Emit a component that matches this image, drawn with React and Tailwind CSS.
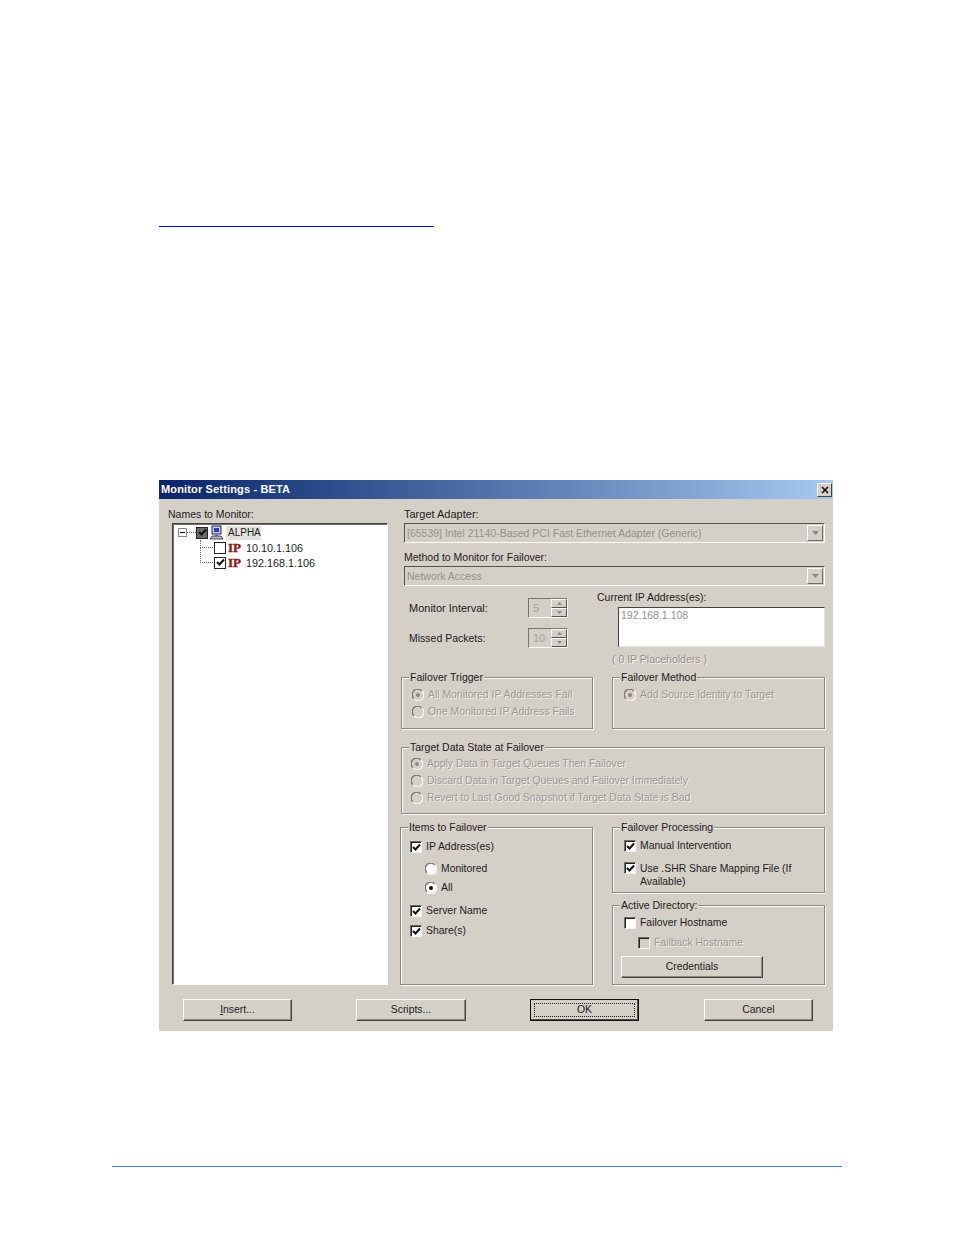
const FONT = "font-['Liberation_Sans',Arial,sans-serif]";

function Group({ title, className, children }) {
  return (
    <div className={`relative border border-[#8a8883] shadow-[1px_1px_0_#fff,inset_1px_1px_0_#fff] ${className}`}>
      <span className="absolute left-[7px] top-[-8px] bg-[#d4d0c8] px-px text-[10.5px] leading-[14px] text-[#1c1c1c]">
        {title}
      </span>
      {children}
    </div>
  );
}

function Tick() {
  return (
    <svg width="9" height="9" viewBox="0 0 9 9" fill="none">
      <path d="M1 4l2.5 2.5L8 1.5" stroke="#111" strokeWidth="2" />
    </svg>
  );
}

function Check({ checked, disabled }) {
  return (
    <span
      className={`flex h-3 w-3 shrink-0 items-center justify-center border border-t-[#6f6d68] border-l-[#6f6d68] border-r-[#f4f3f0] border-b-[#f4f3f0] shadow-[inset_1px_1px_0_#222] ${
        disabled ? "bg-[#d4d0c8]" : "bg-white"
      }`}
    >
      {checked && <Tick />}
    </span>
  );
}

function Radio({ checked, disabled }) {
  return (
    <svg width="12" height="12" viewBox="0 0 12 12" className="shrink-0">
      <circle cx="6" cy="6" r="5" fill={disabled ? "#d4d0c8" : "#fff"} />
      <path d="M1.8 9.5A5.4 5.4 0 0 1 9.5 1.8" fill="none" stroke="#77756f" strokeWidth="1.3" />
      <path d="M10.2 2.5A5.4 5.4 0 0 1 2.5 10.2" fill="none" stroke="#f6f5f2" strokeWidth="1.3" />
      {checked && <circle cx="6" cy="6" r="2" fill={disabled ? "#8a8883" : "#111"} />}
    </svg>
  );
}

function Option({ type, checked, disabled, label, className }) {
  return (
    <div
      className={`flex items-center gap-1 text-[10.4px] leading-[14px] ${
        disabled ? "text-[#9b9993] [text-shadow:1px_1px_0_#f0efeb]" : "text-[#1c1c1c]"
      } ${className || ""}`}
    >
      {type === "radio" ? <Radio checked={checked} disabled={disabled} /> : <Check checked={checked} disabled={disabled} />}
      <span>{label}</span>
    </div>
  );
}

function Combo({ value }) {
  return (
    <div className="flex h-5 w-[421px] items-center justify-between border border-t-[#55534f] border-l-[#55534f] border-r-white border-b-white pl-[2px] pr-px text-[10.5px] text-[#93918b]">
      <span>{value}</span>
      <span className="flex h-4 w-4 items-center justify-center border border-t-white border-l-white border-r-[#6f6d68] border-b-[#6f6d68] bg-[#d4d0c8]">
        <svg width="7" height="4" viewBox="0 0 7 4">
          <path d="M0 0h7L3.5 4z" fill="#8a8883" />
        </svg>
      </span>
    </div>
  );
}

function Spinner({ value }) {
  return (
    <div className="flex h-5 w-10 items-center justify-between border border-t-[#77756f] border-l-[#77756f] border-r-white border-b-white pl-1 text-[11px] text-[#a3a19b]">
      <span>{value}</span>
      <span className="flex h-[18px] w-4 flex-col">
        <span className="flex h-[9px] items-center justify-center border border-t-white border-l-white border-r-[#55534f] border-b-[#55534f]">
          <svg width="5" height="3" viewBox="0 0 5 3"><path d="M2.5 0L5 3H0z" fill="#8a8883" /></svg>
        </span>
        <span className="flex h-[9px] items-center justify-center border border-t-white border-l-white border-r-[#55534f] border-b-[#55534f]">
          <svg width="5" height="3" viewBox="0 0 5 3"><path d="M0 0h5L2.5 3z" fill="#8a8883" /></svg>
        </span>
      </span>
    </div>
  );
}

function Button({ children, className }) {
  return (
    <button
      type="button"
      className={`h-[22px] border border-t-white border-l-white border-r-[#45433f] border-b-[#45433f] bg-[#d4d0c8] text-[10.4px] leading-none text-[#1c1c1c] shadow-[inset_-1px_-1px_0_#8a8883] ${className || ""}`}
    >
      {children}
    </button>
  );
}

function Computer() {
  return (
    <svg width="15" height="15" viewBox="0 0 15 15" className="shrink-0">
      <rect x="3" y="1" width="9" height="8" fill="#c9c9d6" stroke="#23235a" />
      <rect x="5" y="3" width="5" height="4" fill="#2c3fb4" />
      <rect x="6" y="9" width="3" height="2" fill="#8a8a9a" />
      <path d="M1 14l2-3h9l2 3z" fill="#b6b6c6" stroke="#23235a" strokeWidth="0.8" />
    </svg>
  );
}

function TreeChild({ checked, first, label }) {
  return (
    <div className="flex h-[15px] items-center pl-[27px]">
      <span
        className={`w-[13px] shrink-0 self-start border-b border-l border-dotted border-[#6f6d68] ${
          first ? "h-[8px]" : "mt-[-7px] h-[15px]"
        }`}
      />
      <span className="ml-px flex h-3 w-3 shrink-0 items-center justify-center border border-[#222] bg-white">
        {checked && <Tick />}
      </span>
      <span className="ml-[2px] w-[13px] shrink-0 font-['Liberation_Serif',serif] text-[13px] font-bold leading-none text-[#8e1a24] [-webkit-text-stroke:0.4px_#8e1a24]">
        IP
      </span>
      <span className="ml-[5px] text-[10.8px]">{label}</span>
    </div>
  );
}

function Tree() {
  return (
    <div className="h-[462px] w-[216px] border border-t-[#45433f] border-l-[#45433f] border-r-white border-b-white bg-white pt-px text-[11px] leading-[14px] text-[#1c1c1c] shadow-[inset_1px_1px_0_#6f6d68]">
      <div className="flex h-[15px] items-center pl-[5px]">
        <span className="flex h-[9px] w-[9px] shrink-0 items-center justify-center border border-[#8a8883]">
          <span className="h-px w-[5px] bg-[#111]" />
        </span>
        <span className="w-[9px] shrink-0 border-t border-dotted border-[#6f6d68]" />
        <span className="flex h-3 w-3 shrink-0 items-center justify-center border border-[#222] bg-[#6b6964]">
          <Tick />
        </span>
        <span className="ml-px">
          <Computer />
        </span>
        <span className="ml-[2px] w-[35px] bg-[#e4e2dc] px-[2px] text-[10px]">ALPHA</span>
      </div>
      <TreeChild first checked={false} label="10.10.1.106" />
      <TreeChild checked label="192.168.1.106" />
    </div>
  );
}

export default function App() {
  return (
    <div className={`h-[1235px] w-[954px] overflow-hidden bg-white pt-[226px] ${FONT}`}>
      <div className="ml-[159px] h-px w-[275px] bg-[#0000ff]" />

      {/* dialog */}
      <div className="ml-[159px] mt-[253px] h-[551px] w-[674px] bg-[#d4d0c8]">
        <div className="flex h-[19px] items-center justify-between bg-gradient-to-r from-[#0a246a] to-[#a6caf0] pl-[2px] pr-px">
          <span className="text-[11px] font-bold tracking-[0.15px] text-white">Monitor Settings - BETA</span>
          <span className="flex h-[14px] w-[15px] items-center justify-center border border-t-white border-l-white border-r-[#45433f] border-b-[#45433f] bg-[#d4d0c8]">
            <svg width="8" height="8" viewBox="0 0 8 8">
              <path d="M1 1l6 6M7 1L1 7" stroke="#111" strokeWidth="1.6" />
            </svg>
          </span>
        </div>

        <div className="flex pt-[8px]">
          {/* left column */}
          <div className="ml-[9px] w-[236px]">
            <div className="h-4 text-[10.5px] leading-[14px] text-[#1c1c1c]">Names to Monitor:</div>
            <div className="ml-[4px]">
              <Tree />
            </div>
          </div>

          {/* right column */}
          <div className="w-[425px] text-[10.5px] leading-[14px] text-[#1c1c1c]">
            <div className="h-4 text-[11px]">Target Adapter:</div>
            <Combo value="[65539] Intel 21140-Based PCI Fast Ethernet Adapter (Generic)" />
            <div className="mt-[7px] h-4">Method to Monitor for Failover:</div>
            <Combo value="Network Access" />

            <div className="mt-[4px] flex">
              <div className="ml-[5px] w-[188px] pt-[8px]">
                <div className="flex items-center justify-between pr-[29px]">
                  <span className="text-[11px]">Monitor Interval:</span>
                  <Spinner value="5" />
                </div>
                <div className="mt-[10px] flex items-center justify-between pr-[29px]">
                  <span>Missed Packets:</span>
                  <Spinner value="10" />
                </div>
              </div>
              <div>
                <div className="h-[17px]">Current IP Address(es):</div>
                <div className="ml-[21px] h-10 w-[207px] border border-t-[#45433f] border-l-[#45433f] border-r-[#e8e6e0] border-b-[#e8e6e0] bg-white pl-[2px] text-[#93918b]">
                  192.168.1.108
                </div>
                <div className="ml-[15px] mt-[5px] text-[#93918b] [text-shadow:1px_1px_0_#f0efeb]">( 0 IP Placeholders )</div>
              </div>
            </div>

            <div className="mt-[11px] flex">
              <Group title="Failover Trigger" className="ml-[-3px] h-[52px] w-[192px] pl-[10px] pt-[10px]">
                <Option type="radio" checked disabled label="All Monitored IP Addresses Fail" />
                <Option type="radio" disabled label="One Monitored IP Address Fails" className="mt-[3px]" />
              </Group>
              <Group title="Failover Method" className="ml-[19px] h-[52px] w-[213px] pl-[11px] pt-[10px]">
                <Option type="radio" checked disabled label="Add Source Identity to Target" />
              </Group>
            </div>

            <Group title="Target Data State at Failover" className="ml-[-3px] mt-[18px] h-[67px] w-[424px] pl-[9px] pt-[9px]">
              <Option type="radio" checked disabled label="Apply Data in Target Queues Then Failover" />
              <Option type="radio" disabled label="Discard Data in Target Queues and Failover Immediately" className="mt-[3px]" />
              <Option type="radio" disabled label="Revert to Last Good Snapshot if Target Data State is Bad" className="mt-[3px]" />
            </Group>

            <div className="mt-[13px] flex">
              <Group title="Items to Failover" className="ml-[-4px] h-[158px] w-[193px] pl-[9px] pt-[12px]">
                <Option type="check" checked label="IP Address(es)" />
                <Option type="radio" label="Monitored" className="ml-[15px] mt-[8px]" />
                <Option type="radio" checked label="All" className="ml-[15px] mt-[5px]" />
                <Option type="check" checked label="Server Name" className="mt-[9px]" />
                <Option type="check" checked label="Share(s)" className="mt-[6px]" />
              </Group>
              <div className="ml-[19px] w-[213px]">
                <Group title="Failover Processing" className="h-[66px] pl-[11px] pt-[11px]">
                  <Option type="check" checked label="Manual Intervention" />
                  <div className="mt-[9px] flex gap-1 text-[10.4px]">
                    <Check checked />
                    <span className="w-[160px] leading-[13px]">Use .SHR Share Mapping File (If Available)</span>
                  </div>
                </Group>
                <Group title="Active Directory:" className="mt-[12px] h-[80px] pl-[11px] pt-[10px]">
                  <Option type="check" label="Failover Hostname" />
                  <Option type="check" disabled label="Failback Hostname" className="ml-[14px] mt-[6px]" />
                  <Button className="ml-[-3px] mt-[6px] block w-[142px]">Credentials</Button>
                </Group>
              </div>
            </div>
          </div>
        </div>

        {/* bottom buttons */}
        <div className="ml-[24px] mt-[14px] flex">
          <Button className="w-[109px]"><span className="underline">I</span>nsert...</Button>
          <Button className="ml-[64px] w-[110px]">Scripts...</Button>
          <button type="button" className="ml-[64px] h-[22px] w-[109px] border border-[#111] bg-[#d4d0c8] p-[3px] text-[10.4px] leading-none text-[#1c1c1c] shadow-[inset_-1px_-1px_0_#55534f]">
            <span className="flex h-full items-center justify-center border border-dotted border-[#222]">OK</span>
          </button>
          <Button className="ml-[65px] w-[109px]">Cancel</Button>
        </div>
      </div>

      {/* page footer rule */}
      <div className="ml-[112px] mt-[135px] h-px w-[730px] bg-[#4a7fd8]" />
    </div>
  );
}
